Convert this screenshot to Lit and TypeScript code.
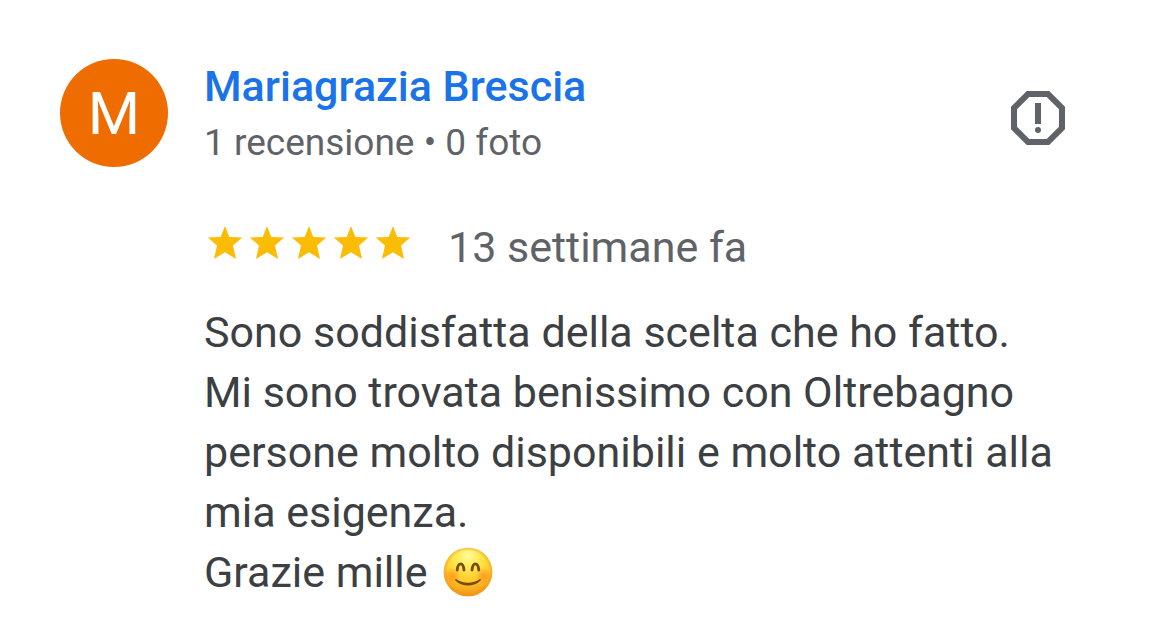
import { LitElement, html, css } from "lit";
import { customElement } from "lit/decorators.js";

@customElement("app-root")
export class AppRoot extends LitElement {
  static styles = css`
    :host {
      display: block;
      min-height: 100vh;
      background: #fff;
      color: #3c4043;
      font-family: Roboto, "Liberation Sans", sans-serif;
      font-size: 43px;
      line-height: 60px;
    }
    .review {
      display: grid;
      grid-template-columns: 108px 1fr;
      column-gap: 36px;
      padding: 56px 96px 36px 60px;
    }
    .avatar {
      display: flex;
      align-items: center;
      justify-content: center;
      box-sizing: border-box;
      width: 108px;
      height: 108px;
      margin-top: 3px;
      padding-top: 2px;
      border-radius: 50%;
      background: #ef6c00;
      color: #fff;
      font-size: 60px;
      line-height: 64px;
    }
    .head {
      display: flex;
      justify-content: space-between;
      align-items: flex-start;
    }
    .author {
      display: block;
      color: #1a73e8;
      font-weight: 500;
      text-decoration: none;
    }
    .meta {
      color: #5f6368;
      font-size: 37px;
      line-height: 54px;
    }
    .report {
      margin: 26px 0 0;
      padding: 0;
      border: 0;
      background: none;
      color: #5f6368;
      line-height: 0;
      cursor: pointer;
    }
    .body {
      grid-column: 2;
      padding-top: 47px;
    }
    .rating {
      display: flex;
      align-items: center;
      gap: 34px;
      color: #5f6368;
    }
    .stars {
      display: flex;
      margin-bottom: 8px;
    }
    .text {
      margin: 25px 0 0;
      white-space: pre-line;
    }
    .emoji {
      vertical-align: -10px;
      margin-left: 5px;
    }
  `;

  render() {
    return html`
      <article class="review">
        <div class="avatar" aria-hidden="true">M</div>
        <header class="head">
          <div>
            <a class="author" href="#">Mariagrazia Brescia</a>
            <div class="meta">1 recensione • 0 foto</div>
          </div>
          <button class="report" type="button" aria-label="Segnala recensione">
            <svg width="72" height="72" viewBox="0 0 24 24" fill="currentColor">
              <path d="M15.73 3H8.27L3 8.27v7.46L8.27 21h7.46L21 15.73V8.27L15.73 3zM19 14.9L14.9 19H9.1L5 14.9V9.1L9.1 5h5.8L19 9.1v5.8z" />
              <path d="M11 7h2v7h-2z" />
              <circle cx="12" cy="16" r="1" />
            </svg>
          </button>
        </header>
        <div class="body">
          <div class="rating">
            <div class="stars" role="img" aria-label="5 stelle">
              ${[1, 2, 3, 4, 5].map(
                () => html`<svg width="42" height="42" viewBox="0 0 42 42" fill="#fbbc04">
                  <path d="M21 4L25.3 14.9L38.2 15.5L29 23.4L32 37L21 30.2L10 37L13 23.4L3.8 15.5L16.7 14.9Z" />
                </svg>`
              )}
            </div>
            <span>13 settimane fa</span>
          </div>
          <p class="text">Sono soddisfatta della scelta che ho fatto.
Mi sono trovata benissimo con Oltrebagno persone molto disponibili e molto attenti alla mia esigenza.
Grazie mille <svg class="emoji" role="img" aria-label="😊" width="50" height="50" viewBox="0 0 50 50">
              <defs>
                <radialGradient id="face" cx="50%" cy="16%" r="86%">
                  <stop offset="0" stop-color="#fffa9c" />
                  <stop offset="0.3" stop-color="#ffe94f" />
                  <stop offset="0.65" stop-color="#fdc727" />
                  <stop offset="1" stop-color="#ee8d12" />
                </radialGradient>
                <radialGradient id="rim">
                  <stop offset="0.86" stop-color="#f09a18" stop-opacity="0" />
                  <stop offset="1" stop-color="#f09a18" stop-opacity="0.6" />
                </radialGradient>
                <radialGradient id="blush">
                  <stop offset="0" stop-color="#ff7a1c" stop-opacity="0.6" />
                  <stop offset="1" stop-color="#ff7a1c" stop-opacity="0" />
                </radialGradient>
              </defs>
              <circle cx="25" cy="25" r="24.3" fill="url(#face)" />
              <circle cx="25" cy="25" r="24.3" fill="url(#rim)" />
              <circle cx="9.5" cy="29" r="8.5" fill="url(#blush)" />
              <circle cx="40.5" cy="29" r="8.5" fill="url(#blush)" />
              <g fill="none" stroke="#794a0b" stroke-width="2.8" stroke-linecap="round">
                <path d="M14.2 23.2C15 14.8 20.2 14.8 21 23.2" />
                <path d="M29 23.2C29.8 14.8 35 14.8 35.8 23.2" />
              </g>
              <path d="M13.5 32.2C19 36.8 31 36.8 36.500 32.200C37.800 31.500 38.200 32.500 37.500 33.600C32 40.200 18 40.200 12.500 33.600C11.800 32.500 12.200 31.500 13.500 32.200Z" fill="#794a0b" />
            </svg></p>
        </div>
      </article>
    `;
  }
}
